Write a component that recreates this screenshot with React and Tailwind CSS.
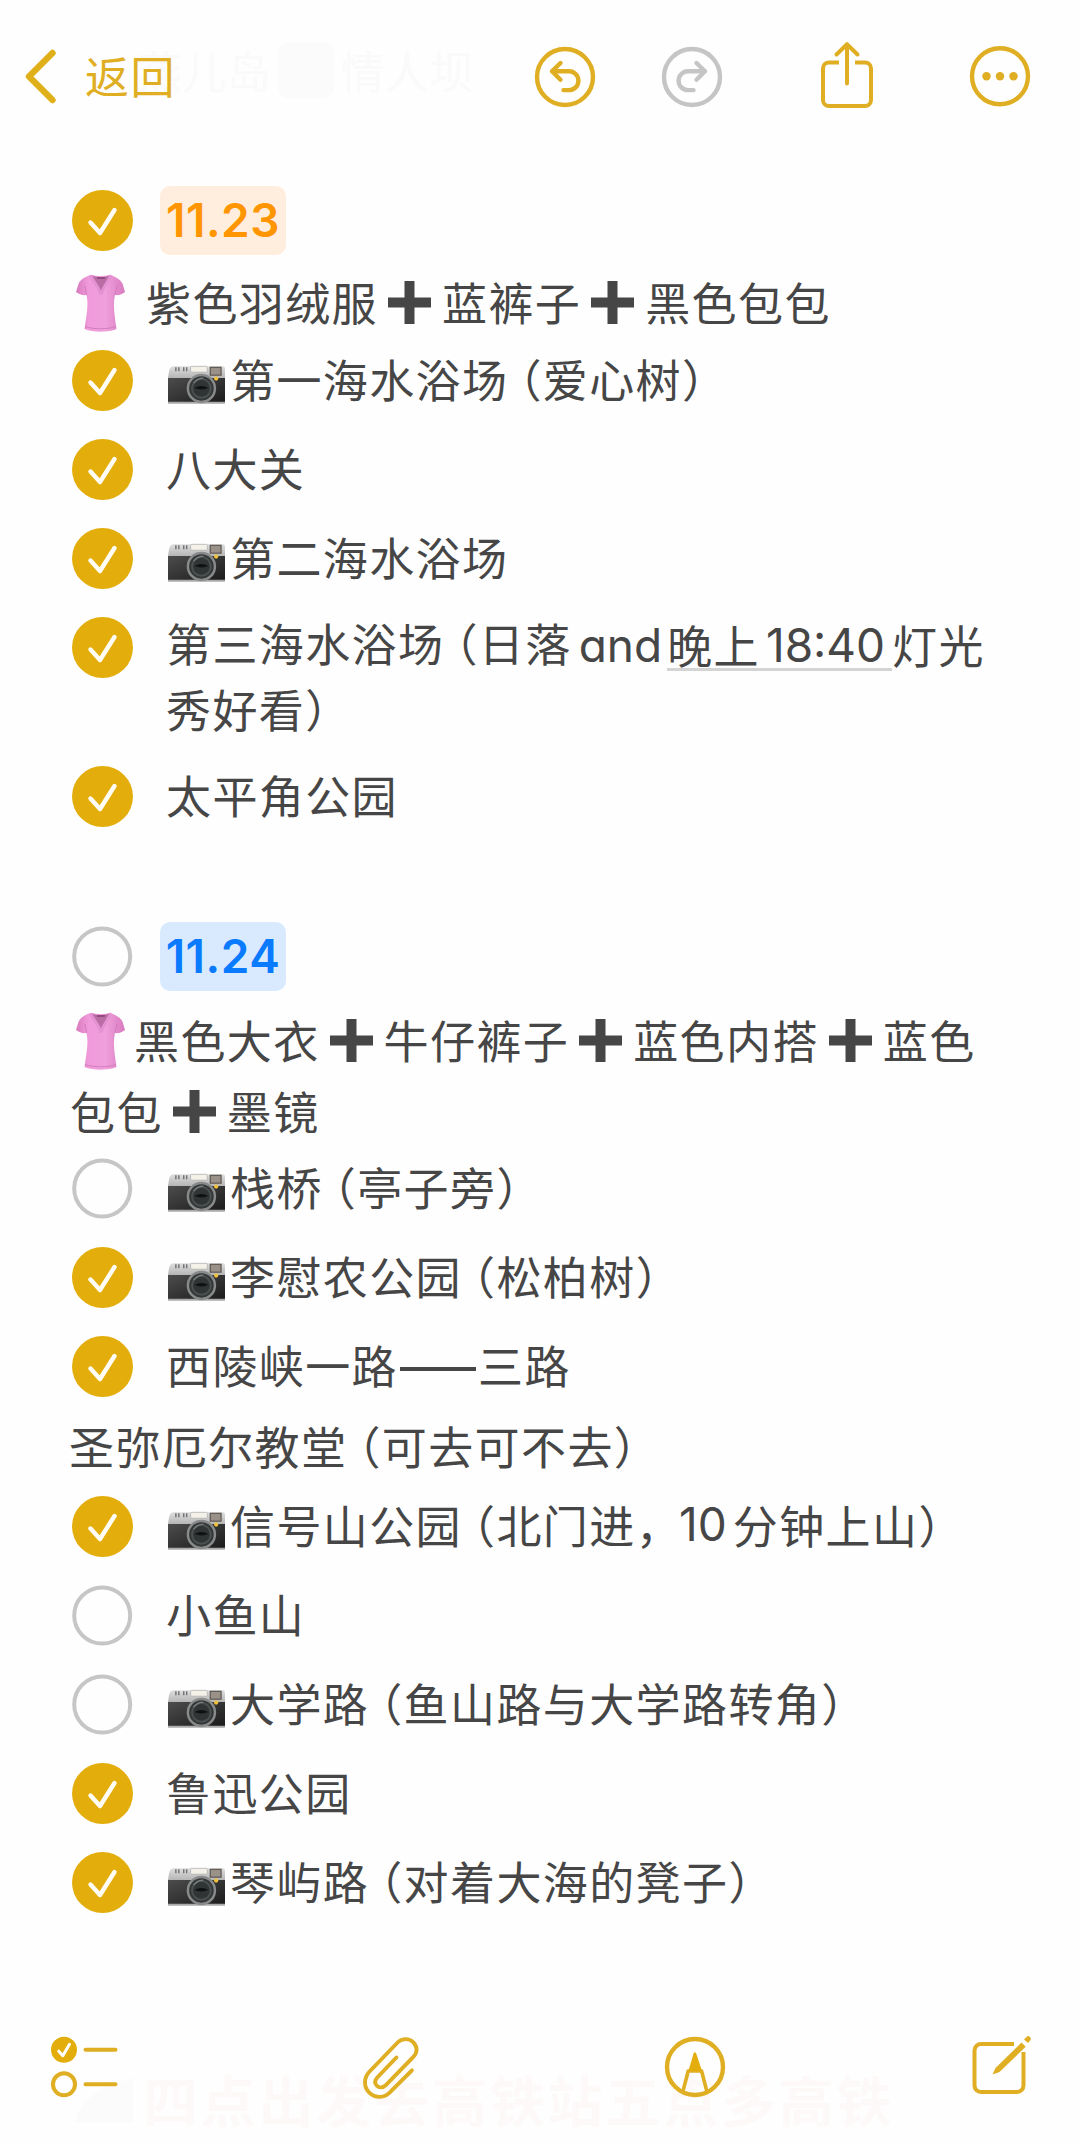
import React from "react";

const FIRST_DAY = [
  { done: true, camera: true, text: "第一海水浴场（爱心树）" },
  { done: true, text: "八大关" },
  { done: true, camera: true, text: "第二海水浴场" },
];

const SECOND_DAY = [
  { done: false, camera: true, text: "栈桥（亭子旁）" },
  { done: true, camera: true, text: "李慰农公园（松柏树）" },
  { done: true, text: "西陵峡一路——三路" },
];

const SECOND_DAY_MORE = [
  { done: true, camera: true, text: "信号山公园（北门进，10分钟上山）" },
  { done: false, text: "小鱼山" },
  { done: false, camera: true, text: "大学路（鱼山路与大学路转角）" },
  { done: true, text: "鲁迅公园" },
  { done: true, camera: true, text: "琴屿路（对着大海的凳子）" },
];

export default function App() {
  return (
    <div className="flex h-[2144px] w-[1080px] flex-col overflow-hidden bg-[#fefefe] font-['Noto_Sans_CJK_SC',sans-serif] text-[45px] tracking-[1.4px] text-[#464646]">
      <TopBar />

      <main className="flex flex-1 flex-col pt-[22px]">
        <Row done>
          <DateTag className="bg-[#ffeedd] text-[#ff9500]">11.23</DateTag>
        </Row>
        <div className="h-[71px] pt-[2px] leading-[71px] whitespace-nowrap">
          <p className="flex h-[71px] items-center pl-[76px]">
            <Shirt />
            <span className="-mt-[2px] ml-[20px]">紫色羽绒服</span>
            <Plus />
            <span className="-mt-[2px]">蓝裤子</span>
            <Plus />
            <span className="-mt-[2px]">黑色包包</span>
          </p>
        </div>
        {FIRST_DAY.map((item) => (
          <Item key={item.text} {...item} />
        ))}
        <div className="flex h-[149px] pl-[72px]">
          <Check done className="mt-[14px]" />
          <div className="ml-[33px] pt-[10px] leading-[64px] whitespace-nowrap">
            <div className="flex">
              <Rich text="第三海水浴场（日落" />
              <Latin className="mr-[5px] ml-[7px] tracking-[-0.500px]">and</Latin>
              <span className="flex h-[58px] border-b-[3px] border-[#d4d4d4]">
                晚上<Latin className="mr-[7px] ml-[6px]">18:40</Latin>
              </span>
              灯光
            </div>
            <div>
              <Rich text="秀好看）" />
            </div>
          </div>
        </div>
        <Item done text="太平角公园" />

        <div className="h-[71px]" />

        <Row>
          <DateTag className="bg-[#d9eafe] text-[#0a7aff]">11.24</DateTag>
        </Row>
        <div className="h-[143px] pt-[4px] leading-[71px] whitespace-nowrap">
          <p className="flex h-[71px] items-center pl-[76px]">
            <Shirt />
            <span className="-mt-[3px] ml-[8px]">黑色大衣</span>
            <Plus />
            <span className="-mt-[3px]">牛仔裤子</span>
            <Plus />
            <span className="-mt-[3px]">蓝色内搭</span>
            <Plus />
            <span className="-mt-[3px]">蓝色</span>
          </p>
          <p className="flex h-[71px] items-center pl-[70px]">
            <span className="-mt-[3px]">包包</span>
            <Plus />
            <span className="-mt-[3px]">墨镜</span>
          </p>
        </div>
        {SECOND_DAY.map((item) => (
          <Item key={item.text} {...item} />
        ))}
        <p className="flex h-[71px] items-center pl-[69px] pt-[3px] whitespace-nowrap">
          <Rich text="圣弥厄尔教堂（可去可不去）" />
        </p>
        {SECOND_DAY_MORE.map((item) => (
          <Item key={item.text} {...item} />
        ))}
      </main>

      <BottomBar />
    </div>
  );
}

function TopBar() {
  return (
    <header className="relative flex h-[154px] items-start text-[#dfae23]">
      {/* note text that scrolled under the bar */}
      <div className="absolute left-[138px] top-[37px] flex items-center text-[44px] leading-[66px] tracking-[0.500px] text-[#fafafa]">
        燕儿岛
        <span className="ml-[6px] h-[56px] w-[56px] rounded-[10px] bg-[#fbfbfb]" />
        <span className="ml-[7px]">情人坝</span>
      </div>
      <button className="relative flex items-center pl-[25px] pt-[44px]">
        <svg width="32" height="64" viewBox="0 0 32 64" fill="none" stroke="#e0b01a" strokeWidth="6.400" strokeLinecap="round" strokeLinejoin="round">
          <path d="M27.500 9 4 32.500 27.500 56" />
        </svg>
        <span className="-mt-[3px] ml-[28px] text-[44px] leading-[60px]">返回</span>
      </button>
      <div className="relative ml-auto flex pr-[49px] pt-[36px]">
        <svg width="62" height="80" viewBox="0 0 62 80" fill="none" stroke="currentColor" strokeWidth="4.400" strokeLinecap="round" strokeLinejoin="round">
          <circle cx="31" cy="41" r="28" />
          <path d="M26.500 27 18 35.300l8.500 8.500M18 35.300h17a9.400 9.400 0 0 1 0 18.800h-5.500" />
        </svg>
        <svg className="ml-[65px] text-[#c5c5c5]" width="62" height="80" viewBox="0 0 62 80" fill="none" stroke="currentColor" strokeWidth="4.400" strokeLinecap="round" strokeLinejoin="round">
          <circle cx="31" cy="41" r="28" />
          <path d="M35.500 27 44 35.300l-8.500 8.500M44 35.300H27a9.400 9.400 0 0 0 0 18.800h5.500" />
        </svg>
        <svg className="ml-[97px]" width="54" height="80" viewBox="0 0 54 80" fill="none" stroke="currentColor" strokeWidth="4" strokeLinecap="round" strokeLinejoin="round">
          <path d="M19 26.500H9a6 6 0 0 0-6 6V64a6 6 0 0 0 6 6h36a6 6 0 0 0 6-6V32.500a6 6 0 0 0-6-6H35" strokeLinecap="butt" />
          <path d="M27 47.500V8.500M16.500 18.500 27 8.200l10.500 10.300" />
        </svg>
        <svg className="ml-[95px]" width="62" height="80" viewBox="0 0 62 80" fill="none" stroke="currentColor" strokeWidth="4.400">
          <circle cx="31" cy="40.300" r="28" />
          <g fill="currentColor" stroke="none">
            <circle cx="17.500" cy="40.300" r="4.200" />
            <circle cx="31" cy="40.300" r="4.200" />
            <circle cx="44.500" cy="40.300" r="4.200" />
          </g>
        </svg>
      </div>
    </header>
  );
}

function BottomBar() {
  return (
    <footer className="relative flex h-[120px] items-start pl-[50px] pt-[10px] text-[#dfae23]">
      {/* next lines of the note behind the toolbar */}
      <div className="absolute left-[75px] top-[46px] flex items-center whitespace-nowrap text-[55px] font-bold leading-[64px] tracking-[2.800px] text-[#fdf9f9]">
        <svg width="58" height="48" viewBox="0 0 58 48" fill="#fbfbfb">
          <path d="M0 46C4 24 26 10 58 2v44Z" />
        </svg>
        <span className="-mt-[4px] ml-[10px]">四点出发去高铁站五点多高铁</span>
      </div>
      <svg className="relative" width="70" height="68" viewBox="0 0 70 68" fill="none" stroke="currentColor" strokeWidth="4" strokeLinecap="round" strokeLinejoin="round">
        <circle cx="14" cy="15.700" r="13" fill="#e3ae0c" stroke="none" />
        <path d="m8.800 17.200 4 4.500L19.500 10.200" stroke="#fff" strokeWidth="3" />
        <circle cx="14" cy="50.300" r="11" />
        <path d="M35.500 15.700H65.500M35.500 50.300H65.500" />
      </svg>
      <svg className="relative ml-[242px]" width="62" height="72" viewBox="0 0 62 72" fill="none" stroke="currentColor" strokeWidth="4" strokeLinecap="round" strokeLinejoin="round">
        <path transform="translate(-1 -0.500) scale(0.970 0.950)" d="M52.500 38.800 30.500 61.200C24.500 68 14.500 68.500 8.500 62.300C2.500 56 2.800 46.500 8.600 40.200L38 9.200C42.500 4.700 49.500 4.800 53.800 9C58.200 13.500 58.600 19.800 54 24.600L25.600 54.300C22.500 57.500 18.600 57.500 16.300 55C14 52.500 14 49.300 17 46L36.500 25.200" />
      </svg>
      <svg className="relative ml-[240px]" width="62" height="66" viewBox="0 0 62 66" fill="none" stroke="currentColor" strokeWidth="4" strokeLinejoin="round">
        <circle cx="31" cy="33" r="28" strokeWidth="4.400" />
        <path d="M18.800 58 24.200 37h13.400l5.400 21" strokeWidth="3.600" />
        <path d="M29.600 19.500q1.200-2.500 2.600 0L38 37H24.400Z" fill="#e3ae0c" stroke="none" />
      </svg>
      <svg className="relative ml-[245px]" width="64" height="66" viewBox="0 0 64 66" fill="none" stroke="currentColor" strokeWidth="4" strokeLinejoin="round">
        <path d="M43 10H10a6.500 6.500 0 0 0-6.500 6.500v35A6.500 6.500 0 0 0 10 58h36a6.500 6.500 0 0 0 6.500-6.500V18" />
        <g fill="currentColor" stroke="none">
          <path d="m21.500 40.500 3-6.500L50.500 8.500l4.200 4.200L28.500 38Z" />
          <path d="m53 5.500 3-3q1.500-1 3 .500t.500 3l-2.500 3Z" />
        </g>
      </svg>
    </footer>
  );
}

function Row({ done, children }) {
  return (
    <div className="flex h-[89px] shrink-0 items-center pl-[72px]">
      <Check done={done} />
      {children}
    </div>
  );
}

function Item({ done, camera, text }) {
  return (
    <Row done={done}>
      <div className="ml-[33px] flex items-center whitespace-nowrap">
        {camera && <Camera />}
        <Rich text={text} />
      </div>
    </Row>
  );
}

function Check({ done, className = "" }) {
  return (
    <svg className={`shrink-0 ${className}`} width="61" height="61" viewBox="0 0 61 61" fill="none">
      {done ? (
        <>
          <circle cx="30.500" cy="30.500" r="30.500" fill="#e3ae0c" />
          <path d="M18.500 32.500 28 43 42.500 20" stroke="#fffdf5" strokeWidth="4.400" strokeLinecap="round" strokeLinejoin="round" />
        </>
      ) : (
        <circle cx="30.200" cy="30.500" r="28" stroke="#c6c6c6" strokeWidth="4" />
      )}
    </svg>
  );
}

function DateTag({ className, children }) {
  return (
    <span className={`ml-[27px] flex h-[69px] w-[126px] items-center justify-center rounded-[10px] font-[Inter] text-[46px] leading-[67px] font-semibold tracking-[0.500px] ${className}`}>
      {children}
    </span>
  );
}

function Latin({ className = "", children }) {
  return (
    <span className={`font-[Inter] text-[46px] [font-feature-settings:'cv11'] ${className || "mr-[6px]"} tracking-[0px]`}>{children}</span>
  );
}

// Tightens full-width brackets and sets digits in the Latin face
function Rich({ text }) {
  return (
    <span className="-mt-[4px] inline-flex items-center">
      {text.split(/([（），]|——|\d+)/).filter(Boolean).map((part, i) => {
        if (part === "（") return <span key={i} className="-ml-[12px]">{part}</span>;
        if (part === "）") return <span key={i}>{part}</span>;
        if (part === "，") return <span key={i} className="-mr-[3px]">{part}</span>;
        if (part === "——") return <span key={i} className="mx-[2px] mt-[8px] h-[4px] w-[76px] bg-[#464646]" />;
        if (/\d/.test(part)) return <Latin key={i}>{part}</Latin>;
        return <span key={i}>{part}</span>;
      })}
    </span>
  );
}

function Plus() {
  return (
    <svg className="ml-[10px] mr-[11px] shrink-0" width="43" height="43" viewBox="0 0 43 43" fill="#464646">
      <path d="M16.500 0h10v16.500H43v10H26.500V43h-10V26.500H0v-10h16.500Z" />
    </svg>
  );
}

function Shirt() {
  return (
    <svg className="shrink-0" width="50" height="58" viewBox="0 0 50 58">
      <defs>
        <linearGradient id="cloth" x1="0" x2="1">
          <stop offset="0" stopColor="#d779bd" />
          <stop offset="0.250" stopColor="#f09ada" />
          <stop offset="0.600" stopColor="#f0a0dc" />
          <stop offset="1" stopColor="#d87abf" />
        </linearGradient>
      </defs>
      <path d="M15 0.800C9 3 4 5.500 2.500 10L0 18c3 2.500 6.500 3.500 10.500 3C13 32 10 43 8.500 55c8 3.500 24 3.500 32 0C39 43 36.500 32 39 21c4 .5 7-.5 10-3L46.500 9.500C44 5 39 3 34.500 0.800 28 2.500 21 2.500 15 0.800Z" fill="url(#cloth)" />
      <path d="M16 1.500 25 20 33.500 1.500C28 3.500 21 3.500 16 1.500Z" fill="#b96da4" />
      <path d="M14.500 1.500C17 8 22 11 25 20.500M35 1.500C32 8 28 11 25 20.500" fill="none" stroke="#e592d3" strokeWidth="3" />
      <path d="M10.500 21 9 12M39 21 41 12M9 52.500c8 3 23 3 31 0" fill="none" stroke="#cf78b8" strokeWidth="0.900" />
      <path d="M21 4h8" stroke="#7c3c6a" strokeWidth="1.300" />
    </svg>
  );
}

function Camera() {
  return (
    <svg className="ml-[2px] mr-[5px] mt-[8px] shrink-0" width="57" height="39" viewBox="0 0 58 39">
      <defs>
        <linearGradient id="metal" x1="0" y1="0" x2="0" y2="1">
          <stop offset="0" stopColor="#dedede" />
          <stop offset="1" stopColor="#b5b5b5" />
        </linearGradient>
        <linearGradient id="leather" x1="0" y1="0" x2="1" y2="1">
          <stop offset="0" stopColor="#4c4c4c" />
          <stop offset="1" stopColor="#1b1b1b" />
        </linearGradient>
      </defs>
      <path d="M1 6Q2 1 6 1h50q2 0 2 3v9H0Z" fill="url(#metal)" />
      <path d="M0 13h58v25H0Z" fill="url(#leather)" />
      <path d="M0 37h58v2H0Z" fill="#aaa" />
      <path d="M8 2v4M11 2v4M16 2v4M19 2v4" stroke="#747474" strokeWidth="1.500" />
      <rect x="23" y="1" width="17" height="6" rx="1" fill="#f4f1e9" stroke="#aaa" strokeWidth="0.700" />
      <rect x="43" y="2" width="11" height="8" fill="#9a9188" stroke="#5c5650" strokeWidth="1.200" />
      <circle cx="34" cy="23.500" r="15" fill="#898b8b" />
      <circle cx="34" cy="23.500" r="12.500" fill="#343737" />
      <circle cx="34" cy="23.500" r="10.500" fill="#4b5050" />
      <circle cx="34" cy="23.500" r="8.500" fill="#303434" />
      <path d="M27 23q7-4 14 0-7 3-14 0Z" fill="#101111" />
      <path d="M26 18q4-5 10-5" fill="none" stroke="#7b8080" strokeWidth="1.300" />
      <circle cx="49" cy="13.500" r="2.200" fill="#f0c13a" />
    </svg>
  );
}
